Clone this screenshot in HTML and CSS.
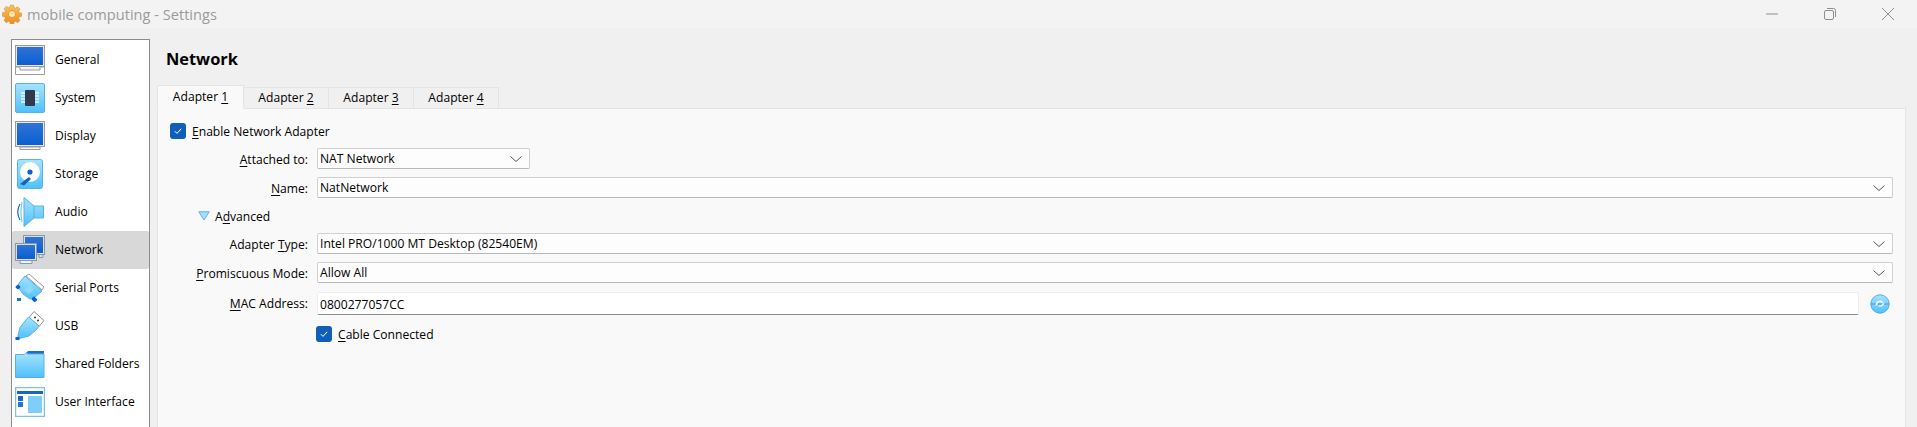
FILE: index.html
```html
<!DOCTYPE html>
<html lang="en">
<head>
<meta charset="utf-8">
<title>mobile computing - Settings</title>
<link rel="stylesheet" href="styles.css">
</head>
<body>
<svg class="defs" width="0" height="0" aria-hidden="true">
  <defs>
    <linearGradient id="sky" x1="0" y1="0" x2="0" y2="1"><stop offset="0" stop-color="#a6e4fd"/><stop offset="1" stop-color="#4fc0fb"/></linearGradient>
    <linearGradient id="deep" x1="0" y1="0" x2="0" y2="1"><stop offset="0" stop-color="#2f73d6"/><stop offset="1" stop-color="#0a5fd0"/></linearGradient>
    <linearGradient id="gear" x1="0" y1="0" x2="0" y2="1"><stop offset="0" stop-color="#fbc25a"/><stop offset="1" stop-color="#ee8a22"/></linearGradient>
  </defs>
</svg>
<header class="titlebar">
  <svg class="app-icon" viewBox="0 0 20 20" width="20" height="20">
    <path fill="url(#gear)" stroke="#d98a2c" stroke-width=".6" d="M8.300 .6h3.400l.5 2.500 1.600.7 2.200-1.400 2.400 2.400-1.400 2.200.7 1.600 2.500.5v3.400l-2.500.5-.7 1.600 1.400 2.200-2.400 2.400-2.200-1.400-1.600.7-.5 2.500H8.300l-.5-2.500-1.600-.7-2.200 1.400-2.400-2.400 1.400-2.200-.7-1.600-2.500-.5V8.600l2.500-.5.7-1.600-1.400-2.200 2.400-2.400 2.200 1.400 1.600-.7z" transform="translate(.6 .6) scale(.94)"/>
    <circle cx="10" cy="10" r="3.600" fill="#fde3a6" stroke="#d98a2c" stroke-width=".7"/>
  </svg>
  <span class="title">mobile computing - Settings</span>
  <div class="win-buttons">
    <svg class="win-btn" viewBox="0 0 12 12" width="12" height="12"><path d="M0 6h12" stroke="#8f8f8f" fill="none"/></svg>
    <svg class="win-btn" viewBox="0 0 12 12" width="12" height="12"><rect x=".5" y="2.500" width="9" height="9" rx="1.500" fill="none" stroke="#8f8f8f"/><path d="M3 .5h6.500a2 2 0 0 1 2 2V9" fill="none" stroke="#8f8f8f"/></svg>
    <svg class="win-btn" viewBox="0 0 12 12" width="12" height="12"><path d="M0 0l12 12M12 0L0 12" stroke="#8f8f8f" fill="none"/></svg>
  </div>
</header>
<div class="main">
  <nav class="sidebar">
    <div class="nav-item">
      <svg class="nav-icon" viewBox="0 0 30 30"><rect x=".5" y=".5" width="29" height="21" fill="#e8e8e8" stroke="#9b9b9b"/><rect x="2" y="2" width="26" height="18" fill="url(#deep)"/><path d="M.5 22h29v7.500H.5z" fill="#fff" stroke="#9b9b9b"/><path d="M5 22v3h20v-3" fill="#f4f4f4" stroke="#9b9b9b"/></svg>
      <span>General</span>
    </div>
    <div class="nav-item">
      <svg class="nav-icon" viewBox="0 0 30 30"><rect x=".5" y=".5" width="29" height="29" rx="1.500" fill="url(#sky)" stroke="#5ab0ea"/><path d="M6 10h18M6 13h18M6 16h18M6 19h18" stroke="#e8f6ff" stroke-width="1.400"/><rect x="10" y="7" width="10" height="16" rx="1" fill="#2f3b4d"/></svg>
      <span>System</span>
    </div>
    <div class="nav-item">
      <svg class="nav-icon" viewBox="0 0 30 30"><rect x=".5" y=".5" width="29" height="25" fill="#e8e8e8" stroke="#9b9b9b"/><rect x="2" y="2" width="26" height="22" fill="url(#deep)"/><path d="M5 26h20v2.500H5z" fill="#f4f4f4" stroke="#9b9b9b"/></svg>
      <span>Display</span>
    </div>
    <div class="nav-item">
      <svg class="nav-icon" viewBox="0 0 30 30"><rect x="2.500" y=".5" width="25" height="29" rx="2" fill="url(#sky)" stroke="#5ab0ea"/><circle cx="15" cy="13" r="10" fill="#fff"/><circle cx="15" cy="13" r="2.600" fill="#0e62c4"/><path d="M5 25l9-7 2 2-7 6.500z" fill="#0e62c4"/></svg>
      <span>Storage</span>
    </div>
    <div class="nav-item">
      <svg class="nav-icon" viewBox="0 0 30 30"><path d="M5 7Q.5 15 5 23" fill="none" stroke="#1466c4" stroke-width="1.200"/><path d="M7 5Q5 15 7 25" fill="none" stroke="#7cc8f5" stroke-width="1.200"/><path d="M9 .5l10 8.500h9.500v12H19L9 29.500z" fill="url(#sky)" stroke="#5ab0ea"/><path d="M19 9v12" stroke="#5ab0ea"/></svg>
      <span>Audio</span>
    </div>
    <div class="nav-item active">
      <svg class="nav-icon" viewBox="0 0 30 30"><rect x="8.500" y=".5" width="21" height="19" fill="#d9dde2" stroke="#8a98a8"/><rect x="10" y="2" width="18" height="16" fill="url(#deep)"/><path d="M24 19.500h4v3h-4z" fill="#d9dde2" stroke="#8a98a8"/><rect x=".5" y="8.500" width="21" height="17" fill="#d9dde2" stroke="#8a98a8"/><rect x="2" y="10" width="18" height="14" fill="url(#deep)"/><path d="M5 25.500h12v3H5z" fill="#eef0f2" stroke="#8a98a8"/></svg>
      <span>Network</span>
    </div>
    <div class="nav-item">
      <svg class="nav-icon" viewBox="0 0 30 30"><path d="M14 1l15 13-2 3L11 3z" fill="#fff" stroke="#9b9b9b"/><path d="M10 3l17 15-8 7-4 1-7-5-5-7 1-4z" fill="url(#sky)" stroke="#5ab0ea"/><path d="M9 17l6-5 4 4-5 5z" fill="#8fd8fb"/><rect x="1" y="12" width="4" height="4" rx="1" transform="rotate(45 3 14)" fill="#0e62c4"/><rect x="2" y="25" width="4" height="3" fill="#1a78d2"/><rect x="17" y="24" width="5" height="4" rx="1" transform="rotate(45 19 26)" fill="#0e62c4"/></svg>
      <span>Serial Ports</span>
    </div>
    <div class="nav-item">
      <svg class="nav-icon" viewBox="0 0 30 30"><path d="M19 .5l10 9-5 6-10-9z" fill="#fff" stroke="#8f8f8f"/><circle cx="20" cy="6.500" r="1" fill="#333"/><circle cx="23" cy="9.500" r="1" fill="#333"/><path d="M14 6l10 9-2 3-8 7-8 2-3 .5 0-3 2-8 7-9z" fill="url(#sky)" stroke="#5ab0ea"/><rect x=".5" y="26" width="4" height="3" fill="#0e62c4"/></svg>
      <span>USB</span>
    </div>
    <div class="nav-item">
      <svg class="nav-icon" viewBox="0 0 30 30"><path d="M11 4l2-2h16v5H9z" fill="#1d6dcc"/><path d="M.5 5.500h9l2-2 1 1.500h16.500v23.500H.5z" fill="url(#sky)" stroke="#5ab0ea"/></svg>
      <span>Shared Folders</span>
    </div>
    <div class="nav-item">
      <svg class="nav-icon" viewBox="0 0 30 30"><rect x=".5" y=".5" width="29" height="29" fill="#fff" stroke="#7cc0ee" stroke-width="1.500"/><rect x="2" y="4" width="26" height="3" fill="#1a66c2"/><rect x="13" y="9" width="14" height="17" fill="#7fcdfb"/><rect x="3" y="9" width="5" height="5" fill="#1a66c2"/><rect x="3" y="15" width="5" height="5" fill="#1a78d6"/></svg>
      <span>User Interface</span>
    </div>
  </nav>
  <section class="content">
    <h1 class="heading">Network</h1>
    <div class="tabs">
      <div class="tab current">Adapter <u>1</u></div>
      <div class="tab">Adapter <u>2</u></div>
      <div class="tab">Adapter <u>3</u></div>
      <div class="tab">Adapter <u>4</u></div>
    </div>
    <div class="panel">
      <label class="check enable"><span class="box"><svg viewBox="0 0 16 16" width="16" height="16"><path d="M4.800 8.200l2.200 2.200 4.200-4.600" fill="none" stroke="#fff"/></svg></span><span class="check-text"><u>E</u>nable Network Adapter</span></label>
      <div class="form top">
        <span class="label"><u>A</u>ttached to:</span>
        <div class="combo short"><span>NAT Network</span><svg viewBox="0 0 12 6" width="12" height="6"><path d="M.5 .5L6 5.500 11.500 .5" fill="none" stroke="#555"/></svg></div>
        <span class="label"><u>N</u>ame:</span>
        <div class="combo"><span>NatNetwork</span><svg viewBox="0 0 12 6" width="12" height="6"><path d="M.5 .5L6 5.500 11.500 .5" fill="none" stroke="#555"/></svg></div>
      </div>
      <div class="advanced">
        <svg viewBox="0 0 12 10" width="12" height="10"><path d="M.8 .8h10.400L6 9z" fill="#a4e0fc" stroke="#62aee6"/></svg>
        <span class="check-text">A<u>d</u>vanced</span>
      </div>
      <div class="form lower">
        <span class="label">Adapter <u>T</u>ype:</span>
        <div class="combo"><span>Intel PRO/1000 MT Desktop (82540EM)</span><svg viewBox="0 0 12 6" width="12" height="6"><path d="M.5 .5L6 5.500 11.500 .5" fill="none" stroke="#555"/></svg></div>
        <span class="label"><u>P</u>romiscuous Mode:</span>
        <div class="combo"><span>Allow All</span><svg viewBox="0 0 12 6" width="12" height="6"><path d="M.5 .5L6 5.500 11.500 .5" fill="none" stroke="#555"/></svg></div>
        <span class="label"><u>M</u>AC Address:</span>
        <div class="mac-row">
          <input class="mac" type="text" value="0800277057CC" aria-label="MAC Address">
          <svg class="refresh" viewBox="0 0 20 20" width="20" height="20"><circle cx="10" cy="10" r="9.200" fill="url(#sky)" stroke="#5aa8ec"/><path d="M1 10h18" stroke="#2a9cf0"/><path d="M6.500 11.500a3.500 3.500 0 0 1 6-3" fill="none" stroke="#f4f8ff" stroke-width="1.800"/><path d="M13.500 8.500a3.500 3.500 0 0 1-5 3.300" fill="none" stroke="#d8ecff" stroke-width="1.800"/></svg>
        </div>
        <span></span>
        <label class="check"><span class="box"><svg viewBox="0 0 16 16" width="16" height="16"><path d="M4.800 8.200l2.200 2.200 4.200-4.600" fill="none" stroke="#fff"/></svg></span><span class="check-text"><u>C</u>able Connected</span></label>
      </div>
    </div>
  </section>
</div>
</body>
</html>
```
FILE: styles.css
```css
* { box-sizing: border-box; }
html, body { margin: 0; height: 427px; overflow: hidden; }
body {
  background: #f0f0f0;
  color: #000;
  font-family: "Open Sans", "Noto Sans", sans-serif;
  font-size: 12.1px;
  line-height: 16px;
}
.defs { display: block; height: 0; }
u { text-underline-offset: 2px; text-decoration-thickness: 1px; }

.titlebar {
  height: 28px;
  background: #f3f3f3;
  display: flex;
  align-items: center;
  padding-left: 2px;
}
.app-icon { flex: none; }
.title { margin-left: 5px; font-size: 14.6px; color: #9b9b9b; }
.win-buttons { margin-left: auto; display: flex; gap: 46px; padding-right: 23px; }

.main { display: flex; padding: 11px 11px 0 11px; height: 399px; }
.sidebar {
  flex: none;
  width: 139px;
  height: 400px;
  background: #fff;
  border: 1px solid #8b8b94;
  border-bottom: 0;
  padding-top: 1px;
}
.nav-item {
  height: 38px;
  display: flex;
  align-items: center;
  gap: 10px;
  padding-left: 3px;
  border-radius: 2px;
}
.nav-item.active { background: #d8d8d8; }
.nav-icon { width: 30px; height: 30px; flex: none; }

.content { flex: 1; min-width: 0; margin-left: 7px; display: flex; flex-direction: column; }
.heading { margin: 0 0 0 9px; font-size: 16.4px; line-height: 20px; font-weight: 700; padding-top: 10px; height: 46px; }
.tabs { display: flex; align-items: flex-end; height: 24px; margin-bottom: -1px; position: relative; z-index: 1; }
.tab {
  height: 22px;
  width: 85px;
  display: flex;
  align-items: center;
  justify-content: center;
  background: #f0f0f0;
  border: 1px solid #e4e4e4;
  border-left: 0;
  white-space: pre;
}
.tab.current {
  height: 24px;
  width: 87px;
  background: #f9f9f9;
  border-left: 1px solid #e4e4e4;
  border-bottom-color: #f9f9f9;
}
.panel {
  flex: 1;
  background: #f9f9f9;
  border: 1px solid #e4e4e4;
  border-bottom: 0;
  padding: 14px 12px 0 12px;
}
.check { display: flex; align-items: center; gap: 6px; height: 16px; }
.check-text { padding-top: 2px; }
.box { width: 16px; height: 16px; background: #0f5fb8; border-radius: 3px; flex: none; display: block; }
.box svg { display: block; }

.form { display: grid; grid-template-columns: 138px 1fr; column-gap: 9px; align-items: center; }
.form.top { margin-top: 9px; row-gap: 8px; }
.form.lower { margin-top: 9px; row-gap: 8px; }
.label { text-align: right; white-space: nowrap; justify-self: end; padding-top: 2px; }

.combo {
  height: 21px;
  background: #fdfdfd;
  border: 1px solid #d0d0d0;
  border-bottom-color: #b8b8b8;
  border-radius: 2px;
  display: flex;
  align-items: center;
  justify-content: space-between;
  padding: 1px 7px 0 2px;
}
.combo.short { width: 213px; }
.combo svg { flex: none; }

.advanced { display: flex; align-items: center; gap: 5px; margin: 10px 0 0 28px; height: 16px; }
.mac-row { display: flex; align-items: center; gap: 11px; margin-top: 1px; }
.mac {
  flex: 1;
  min-width: 0;
  height: 23px;
  border: 1px solid #ececec;
  border-bottom: 1px solid #8a8a8a;
  border-radius: 2px;
  background: #fff;
  padding: 1px 2px 0;
  font: inherit;
  color: #000;
}
.refresh { flex: none; margin-right: 3px; }
.form .check { margin-top: 3px; margin-left: -1px; }
```
